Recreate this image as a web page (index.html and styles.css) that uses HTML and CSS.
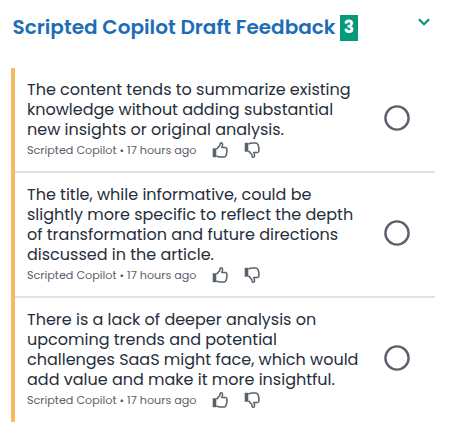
FILE: index.html
```
<!DOCTYPE html>
<html lang="en">
<head>
<meta charset="utf-8">
<title>Scripted Copilot Draft Feedback</title>
<link rel="stylesheet" href="styles.css">
</head>
<body>
<svg class="defs" aria-hidden="true">
  <symbol id="thumb" viewBox="0 0 16 16">
    <path d="M.7 6.3h3.6v8.9H.7z" fill="currentColor"/>
    <path d="M4.4 7.1 7.7 3.8 8.3 1.2Q9.4.4 10.3 1.3 11 2.5 9.8 5.5h3.6q2 .3 1.3 2.5.7.9 0 2 .4 1-.4 2 .2 1.2-.7 1.9-.4 1.1-1.7 1.1H8.3Q6.2 15 4.4 13.8" fill="none" stroke="currentColor" stroke-width="1.5" stroke-linejoin="round"/>
  </symbol>
</svg>
<header class="header">
  <h1 class="title">Scripted Copilot Draft Feedback</h1>
  <span class="badge">3</span>
  <svg class="chevron" viewBox="0 0 12 8"><path d="M.9 1.2 6 6.2 11.1 1.2"/></svg>
</header>
<main class="list">
  <article class="item">
    <div class="content">
      <p class="text">The content tends to summarize existing<br>knowledge without adding substantial<br>new insights or original analysis.</p>
      <div class="meta"><span>Scripted Copilot • 17 hours ago</span><svg class="icon"><use href="#thumb"/></svg><svg class="icon down"><use href="#thumb"/></svg></div>
    </div>
    <svg class="radio" viewBox="0 0 26 26"><circle cx="13" cy="13" r="11.6"/></svg>
  </article>
  <article class="item">
    <div class="content">
      <p class="text">The title, while informative, could be<br>slightly more specific to reflect the depth<br>of transformation and future directions<br>discussed in the article.</p>
      <div class="meta"><span>Scripted Copilot • 17 hours ago</span><svg class="icon"><use href="#thumb"/></svg><svg class="icon down"><use href="#thumb"/></svg></div>
    </div>
    <svg class="radio" viewBox="0 0 26 26"><circle cx="13" cy="13" r="11.6"/></svg>
  </article>
  <article class="item">
    <div class="content">
      <p class="text">There is a lack of deeper analysis on<br>upcoming trends and potential<br>challenges SaaS might face, which would<br>add value and make it more insightful.</p>
      <div class="meta"><span>Scripted Copilot • 17 hours ago</span><svg class="icon"><use href="#thumb"/></svg><svg class="icon down"><use href="#thumb"/></svg></div>
    </div>
    <svg class="radio" viewBox="0 0 26 26"><circle cx="13" cy="13" r="11.6"/></svg>
  </article>
</main>
</body>
</html>
```
FILE: styles.css
```
* { box-sizing: border-box; }
body { margin: 0; background: #fff; color: #252e3a; font-family: Poppins, Inter, sans-serif; }
.defs { display: none; }
.header { display: flex; align-items: center; height: 68px; padding: 0 20px 12px 12.5px; }
.title { margin: 0; width: 327.5px; font-size: 20px; line-height: 24px; padding-bottom: 2px; font-weight: 600; color: #1d6db6; white-space: nowrap; }
.badge { width: 18px; height: 26px; background: #05997c; color: #fff; font-size: 17px; line-height: 25px; font-weight: 700; text-align: center; }
.chevron { width: 12px; height: 8px; margin: 0 0 13px auto; fill: none; stroke: #05997c; stroke-width: 2.3; }
.list { margin: 0 15px 0 11px; }
.item { display: flex; justify-content: space-between; align-items: center; height: 125px; padding: 12px 25px 17px 12px; border-left: 4px solid #f5bb5f; box-shadow: inset 0 -2px #e1e1e1; }
.item:first-child { height: 105px; }
.item:last-child { height: 124px; padding-bottom: 16px; box-shadow: none; }
.content { align-self: flex-start; }
.text { margin: 0; font-size: 16px; line-height: 20px; white-space: nowrap; }
.meta { display: flex; align-items: center; height: 20px; font-size: 11.2px; color: #59616b; white-space: nowrap; }
.meta span { width: 185px; }
.icon { width: 16px; height: 16px; }
.down { margin-left: 16px; transform: scaleY(-1); }
.radio { width: 26px; height: 26px; fill: none; stroke: #59616b; stroke-width: 2.4; }
```
